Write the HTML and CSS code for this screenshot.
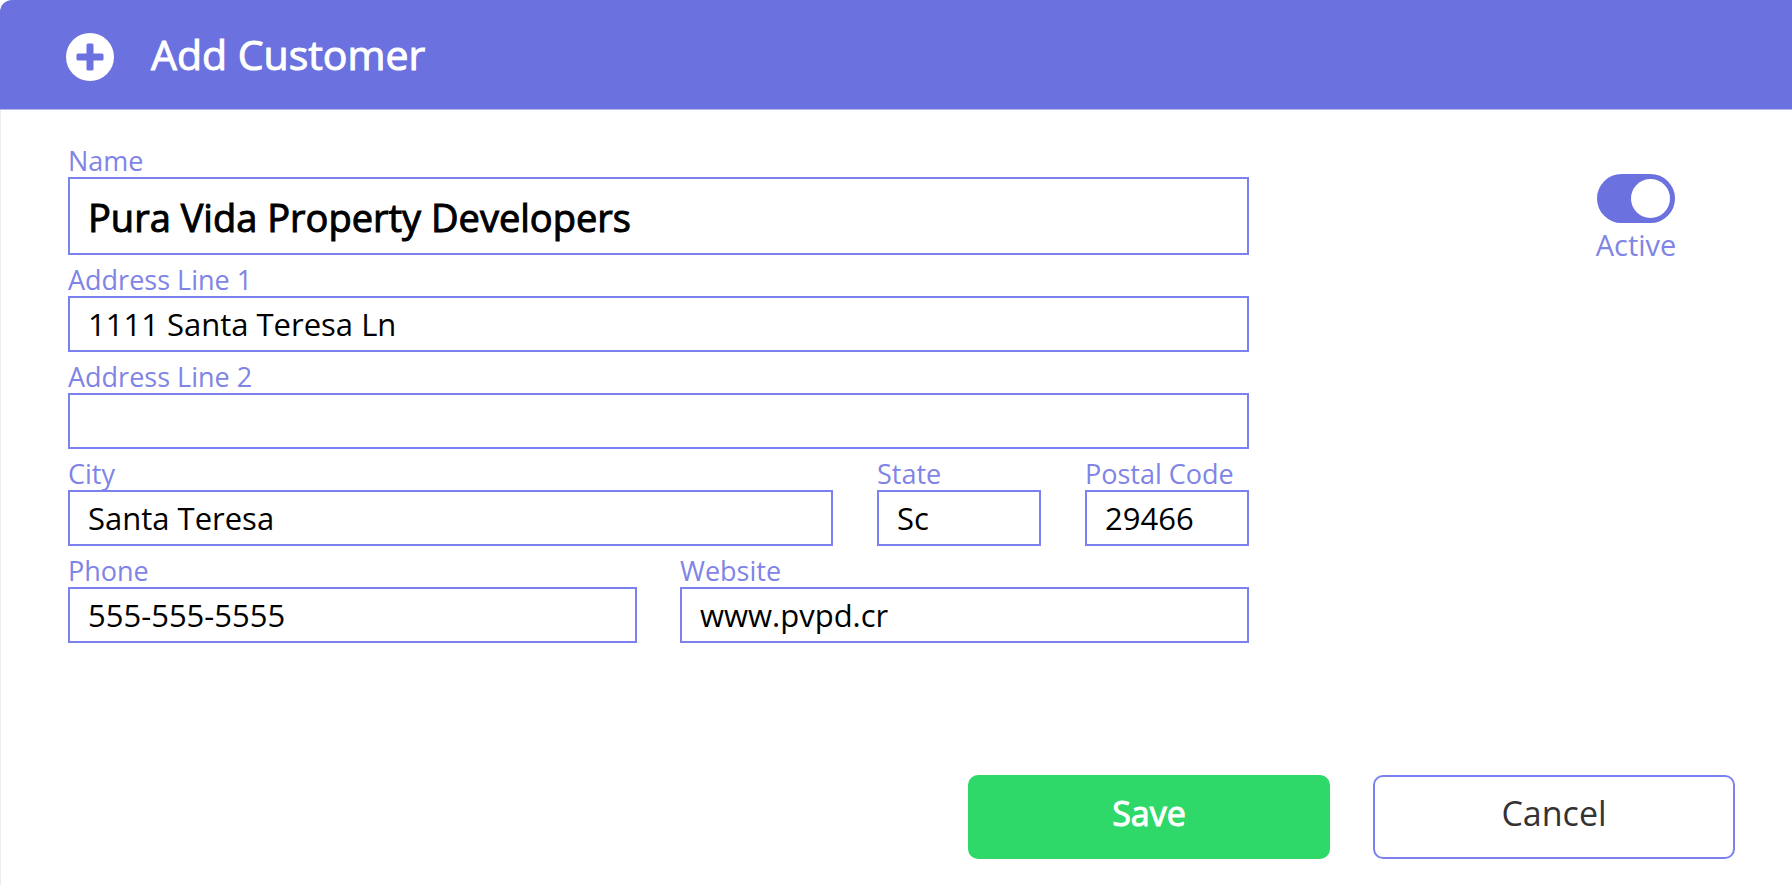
FILE: index.html
```html
<!DOCTYPE html>
<html lang="en">
<head>
    <meta charset="UTF-8">
    <meta name="viewport" content="width=device-width, initial-scale=1.0">
    <title>Add Customer</title>
    <link rel="stylesheet" href="styles.css">
</head>
<body>
    <form class="dialog">
        <header class="dialog-header">
            <svg class="header-icon" viewBox="0 0 48 48" aria-hidden="true">
                <circle cx="24" cy="24" r="24" fill="#fff"/>
                <path d="M22 10.500h4q1.500 0 1.500 1.500v8.500h8.500q1.500 0 1.500 1.500v4q0 1.500-1.500 1.500h-8.500v8.500q0 1.500-1.500 1.500h-4q-1.500 0-1.500-1.500v-8.500h-8.500q-1.500 0-1.500-1.500v-4q0-1.500 1.500-1.500h8.500v-8.500q0-1.500 1.500-1.500z" fill="#6b71de"/>
            </svg>
            <h1>Add Customer</h1>
        </header>

        <div class="dialog-body">
            <div class="fields">
                <div class="field">
                    <label for="name">Name</label>
                    <input type="text" id="name" name="name" class="name-input" value="Pura Vida Property Developers">
                </div>
                <div class="field">
                    <label for="address1">Address Line 1</label>
                    <input type="text" id="address1" name="address1" value="1111 Santa Teresa Ln">
                </div>
                <div class="field">
                    <label for="address2">Address Line 2</label>
                    <input type="text" id="address2" name="address2">
                </div>
                <div class="row row-city">
                    <div class="field">
                        <label for="city">City</label>
                        <input type="text" id="city" name="city" value="Santa Teresa">
                    </div>
                    <div class="field">
                        <label for="state">State</label>
                        <input type="text" id="state" name="state" value="Sc">
                    </div>
                    <div class="field">
                        <label for="postal">Postal Code</label>
                        <input type="text" id="postal" name="postal" value="29466">
                    </div>
                </div>
                <div class="row row-contact">
                    <div class="field">
                        <label for="phone">Phone</label>
                        <input type="text" id="phone" name="phone" value="555-555-5555">
                    </div>
                    <div class="field">
                        <label for="website">Website</label>
                        <input type="text" id="website" name="website" value="www.pvpd.cr">
                    </div>
                </div>
            </div>

            <div class="status">
                <input type="checkbox" id="active" name="active" class="toggle" checked>
                <label for="active">Active</label>
            </div>
        </div>

        <footer class="dialog-footer">
            <button type="submit" class="btn btn-save">Save</button>
            <button type="button" class="btn btn-cancel">Cancel</button>
        </footer>
    </form>
</body>
</html>
```
FILE: styles.css
```css
:root {
    --primary-color: #6b71de;
    --border-color: #7b82f0;
    --label-color: #7f84e6;
    --success-color: #2ed969;
}

* {
    box-sizing: border-box;
}

body {
    margin: 0;
    font-family: "Open Sans", "Noto Sans", sans-serif;
    background-color: #fff;
}

.dialog {
    display: flex;
    flex-direction: column;
    min-height: 100vh;
}

.dialog-header {
    display: flex;
    align-items: center;
    gap: 37px;
    height: 110px;
    padding: 4px 66px 0;
    background-color: var(--primary-color);
    border-bottom: 1px solid #b5b8ef;
    border-top-left-radius: 12px;
    color: #fff;
}

.header-icon {
    width: 48px;
    height: 48px;
}

h1 {
    margin: 0;
    padding-bottom: 6px;
    font-size: 41px;
    font-weight: 400;
    line-height: 56px;
    -webkit-text-stroke: 1px #fff;
}

.dialog-body {
    display: flex;
    flex: 1;
    justify-content: space-between;
    padding: 34px 56px 0 67px;
    border-left: 1px solid #ececec;
}

.fields {
    flex: 1;
}

.field {
    display: flex;
    flex-direction: column;
    min-width: 0;
    padding-bottom: 8px;
}

label {
    color: var(--label-color);
    font-size: 27px;
    line-height: 33px;
}

input[type="text"] {
    width: 100%;
    height: 56px;
    padding: 0 18px;
    border: 2px solid var(--border-color);
    border-radius: 0;
    background-color: #fff;
    color: #000;
    font-family: inherit;
    font-size: 31px;
    outline: none;
}

input.name-input {
    height: 78px;
    padding-top: 2px;
    font-size: 38px;
    -webkit-text-stroke: 1px #000;
}

.row {
    display: grid;
}

.row-city {
    grid-template-columns: 1fr 164px 164px;
    gap: 44px;
}

.row-contact {
    grid-template-columns: 1fr 1fr;
    gap: 43px;
}

.status {
    display: flex;
    flex-direction: column;
    align-items: center;
    width: 200px;
    margin-left: 287px;
    padding-top: 30px;
}

.status label {
    font-size: 29px;
}

.toggle {
    appearance: none;
    display: flex;
    width: 78px;
    height: 49px;
    margin: 0 0 5px;
    padding: 5px;
    border-radius: 25px;
    background-color: #b9b9c4;
    cursor: pointer;
}

.toggle::before {
    content: "";
    width: 39px;
    height: 39px;
    border-radius: 50%;
    background-color: #fff;
}

.toggle:checked {
    justify-content: flex-end;
    background-color: var(--primary-color);
}

.dialog-footer {
    display: flex;
    justify-content: flex-end;
    gap: 43px;
    padding: 32px 57px 26px;
    border-left: 1px solid #ececec;
}

.btn {
    width: 362px;
    height: 84px;
    padding: 0 0 8px;
    border: 2px solid var(--border-color);
    border-radius: 10px;
    background-color: #fff;
    color: #333;
    font-family: inherit;
    font-size: 34px;
    cursor: pointer;
}

.btn-save {
    border-color: var(--success-color);
    background-color: var(--success-color);
    color: #fff;
    -webkit-text-stroke: 1px #fff;
}
```
